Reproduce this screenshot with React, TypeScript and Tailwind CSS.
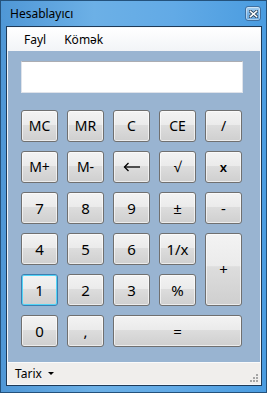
import React from "react";

const font = { fontFamily: '"Noto Sans", "Open Sans", sans-serif' };

type KeyProps = {
  label: React.ReactNode;
  className?: string;
  focused?: boolean;
};

function Key({ label, className = "", focused = false }: KeyProps) {
  return (
    <button
      className={`flex items-center justify-center rounded-[3px] border text-black leading-none bg-[linear-gradient(to_bottom,#f3f3f3_0%,#ebebeb_45%,#dddddd_46%,#cfcfcf_100%)] ${
        focused
          ? "border-[#3c7fb1] shadow-[inset_0_0_0_1px_#52d4f7]"
          : "border-[#707070] shadow-[inset_0_0_0_1px_rgba(255,255,255,0.6)]"
      } ${className}`}
    >
      {label}
    </button>
  );
}

function BackArrow() {
  return (
    <svg width="18" height="10" viewBox="0 0 18 10">
      <path d="M1.5 5 H17" stroke="#000" strokeWidth="1.3" />
      <path d="M5.5 1 L1.5 5 L5.5 9" stroke="#000" strokeWidth="1.3" fill="none" />
    </svg>
  );
}

function CloseButton() {
  return (
    <div className="flex items-center justify-center w-[16px] h-[15px] rounded-[3px] border border-[#3f6f9f] bg-[linear-gradient(to_bottom,#a9d0f0,#78b2e4_50%,#6aa8de)] shadow-[inset_0_0_0_1px_rgba(255,255,255,0.45)]">
      <svg width="9" height="8" viewBox="0 0 9 8">
        <path d="M1.5 1.5 L7.5 6.5 M7.5 1.5 L1.5 6.5" stroke="#2a3f55" strokeWidth="3.2" strokeLinecap="square" />
        <path d="M1.5 1.5 L7.5 6.5 M7.5 1.5 L1.5 6.5" stroke="#fff" strokeWidth="1.6" strokeLinecap="square" />
      </svg>
    </div>
  );
}

function Grip() {
  return (
    <svg width="10" height="10" viewBox="0 0 10 10">
      {[
        [7, 1],
        [4, 4],
        [7, 4],
        [1, 7],
        [4, 7],
        [7, 7],
      ].map(([x, y], i) => (
        <rect key={i} x={x} y={y} width="2" height="2" fill="#a5a5a5" />
      ))}
    </svg>
  );
}

export default function App() {
  const d = "text-[15px]";
  const m = "text-[14px]";

  return (
    <div
      className="w-[267px] h-[393px] flex flex-col border border-[#24527c] bg-[linear-gradient(to_right,#4f97d6,#6cb0e6_35%,#62aae6_65%,#4a9ce0)]"
      style={font}
    >
      {/* title bar */}
      <div className="h-[25px] flex items-center justify-between pl-[9px] pr-[5px]">
        <span className="text-[12px] text-black">Hesablayıcı</span>
        <CloseButton />
      </div>

      <div className="ml-[5px] mr-[4px] border border-[#1f3a57]">
        <div className="border border-[#f4f8fc] flex flex-col">
          {/* menu */}
          <div className="h-[23px] flex items-center gap-[18px] pl-[16px] text-[12px] text-black bg-[linear-gradient(to_bottom,#ffffff,#f2f4f7)]">
            <span>Fayl</span>
            <span>Kömək</span>
          </div>

          {/* client */}
          <div className="h-[311px] bg-[#99b4d1] flex flex-col pt-[10px]">
            <div className="ml-[13px] w-[222px] h-[32px] bg-white border border-[#dfe3ea] border-t-[#abadb3]" />

            <div className="ml-[13px] mt-[17px] grid grid-cols-[repeat(5,37px)] grid-rows-[repeat(6,32px)] gap-x-[9px] gap-y-[9px]">
              <Key label="MC" className={m} />
              <Key label="MR" className={m} />
              <Key label="C" className={m} />
              <Key label="CE" className={m} />
              <Key label="/" className={m} />

              <Key label="M+" className={m} />
              <Key label="M-" className={m} />
              <Key label={<BackArrow />} />
              <Key label="√" className={m} />
              <Key label="x" className="text-[13px] font-semibold" />

              <Key label="7" className={d} />
              <Key label="8" className={d} />
              <Key label="9" className={d} />
              <Key label="±" className={d} />
              <Key label="-" className={d} />

              <Key label="4" className={d} />
              <Key label="5" className={d} />
              <Key label="6" className={d} />
              <Key label="1/x" className={d} />
              <Key label="+" className={`${d} row-span-2`} />

              <Key label="1" className={d} focused />
              <Key label="2" className={d} />
              <Key label="3" className={d} />
              <Key label="%" className={d} />

              <Key label="0" className={d} />
              <Key label="," className={d} />
              <Key label="=" className={`${d} col-span-3`} />
            </div>
          </div>

          {/* status bar */}
          <div className="h-[22px] flex items-center justify-between pl-[7px] pr-[1px] bg-[#f0eeec] border-t border-[#fafafa]">
            <div className="flex items-center gap-[6px] text-[12px] text-black">
              <span>Tarix</span>
              <svg width="6" height="4" viewBox="0 0 6 4">
                <path d="M0 0 H6 L3 3 Z" fill="#000" />
              </svg>
            </div>
            <div className="self-end mb-[1px]">
              <Grip />
            </div>
          </div>
        </div>
      </div>
    </div>
  );
}
